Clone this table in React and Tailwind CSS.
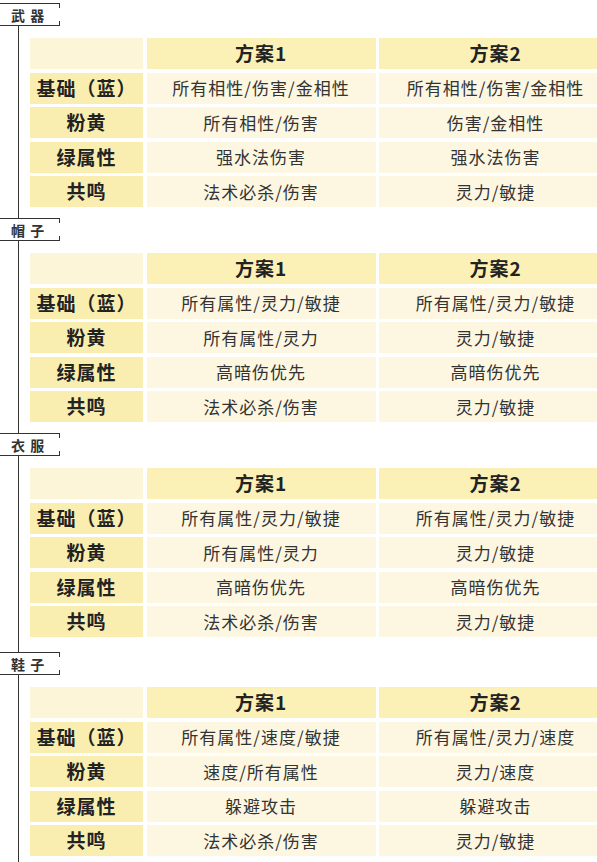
import React from "react";

const sections = [
  {
    label: "武 器",
    rows: [
      ["基础（蓝）", "所有相性/伤害/金相性", "所有相性/伤害/金相性"],
      ["粉黄", "所有相性/伤害", "伤害/金相性"],
      ["绿属性", "强水法伤害", "强水法伤害"],
      ["共鸣", "法术必杀/伤害", "灵力/敏捷"],
    ],
    pb: "pb-[11px]",
  },
  {
    label: "帽 子",
    rows: [
      ["基础（蓝）", "所有属性/灵力/敏捷", "所有属性/灵力/敏捷"],
      ["粉黄", "所有属性/灵力", "灵力/敏捷"],
      ["绿属性", "高暗伤优先", "高暗伤优先"],
      ["共鸣", "法术必杀/伤害", "灵力/敏捷"],
    ],
    pb: "pb-[11px]",
  },
  {
    label: "衣 服",
    rows: [
      ["基础（蓝）", "所有属性/灵力/敏捷", "所有属性/灵力/敏捷"],
      ["粉黄", "所有属性/灵力", "灵力/敏捷"],
      ["绿属性", "高暗伤优先", "高暗伤优先"],
      ["共鸣", "法术必杀/伤害", "灵力/敏捷"],
    ],
    pb: "pb-[15px]",
  },
  {
    label: "鞋 子",
    rows: [
      ["基础（蓝）", "所有属性/速度/敏捷", "所有属性/灵力/速度"],
      ["粉黄", "速度/所有属性", "灵力/速度"],
      ["绿属性", "躲避攻击", "躲避攻击"],
      ["共鸣", "法术必杀/伤害", "灵力/敏捷"],
    ],
    pb: "pb-[10px]",
  },
];

function Label({ text }) {
  return (
    <div className="relative h-[23px] w-[60px] border-t border-b border-[#333] flex items-center pl-[11px] text-[14px] font-bold text-[#333] tracking-[1px] leading-none">
      {text}
      <span className="absolute right-0 top-0 h-[4px] w-px bg-[#333]" />
      <span className="absolute right-0 bottom-0 h-[4px] w-px bg-[#333]" />
    </div>
  );
}

const head = "h-[31px] flex items-center justify-center text-[19px] font-bold text-[#222] tracking-[1px]";
const data = "h-[31px] bg-[#fdf7e2] flex items-center justify-center text-[17px] text-[#333] tracking-[1px]";

function Table({ rows }) {
  return (
    <div className="grid w-[582px] grid-cols-[113px_229px_233px] gap-x-[3.5px] gap-y-[3.5px] [text-spacing-trim:space-all]">
      <div className="h-[31px] bg-[#fcf5d7]" />
      <div className={`${head} bg-[#fbf0b5]`}>方案1</div>
      <div className={`${head} bg-[#fbf0b5]`}>方案2</div>
      {rows.map((r, i) => (
        <React.Fragment key={i}>
          <div className={`${head} bg-[#f9eeb0]`}>{r[0]}</div>
          <div className={data}>{r[1]}</div>
          <div className={data}>{r[2]}</div>
        </React.Fragment>
      ))}
    </div>
  );
}

export default function App() {
  return (
    <div
      className="w-[597px] h-[862px] overflow-hidden bg-white pt-[3px]"
      style={{ fontFamily: '"Noto Sans CJK SC", "Noto Sans", sans-serif' }}
    >
      {sections.map((s, i) => (
        <div key={i}>
          <Label text={s.label} />
          <div className={`ml-[18px] border-l border-[#333] pl-[11px] pt-[12px] ${s.pb}`}>
            <Table rows={s.rows} />
          </div>
        </div>
      ))}
    </div>
  );
}
